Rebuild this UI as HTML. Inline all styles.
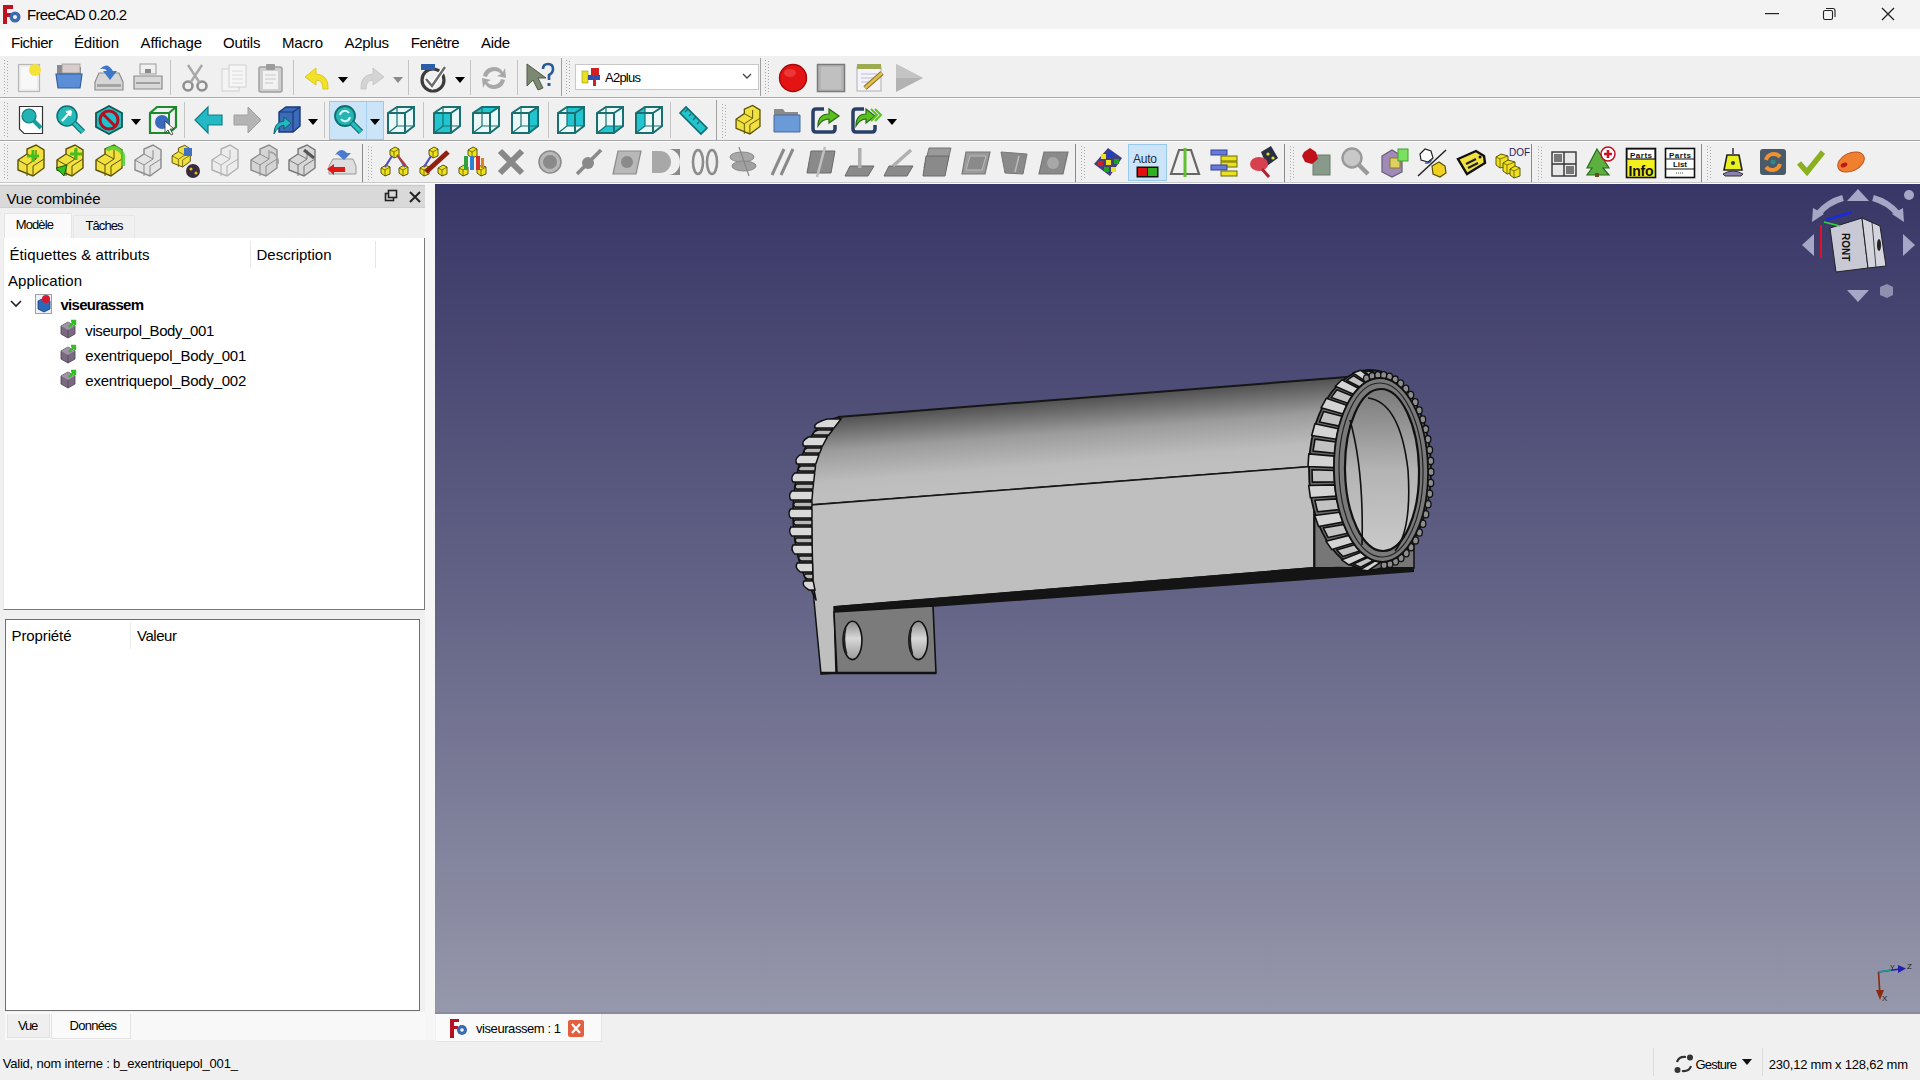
<!DOCTYPE html>
<html><head><meta charset="utf-8"><style>
*{margin:0;padding:0;box-sizing:border-box}
html,body{width:1920px;height:1080px;overflow:hidden;background:#f0f0f0;font-family:"Liberation Sans",sans-serif;color:#000}
.t{position:absolute;white-space:nowrap}
.r{position:absolute}
svg{position:absolute;overflow:visible}
</style></head><body>
<div class="r" style="left:0px;top:0px;width:1920px;height:29px;background:#f3f3f3;"></div>
<div class="r" style="left:0px;top:29px;width:1920px;height:27px;background:#ffffff;"></div>
<div class="r" style="left:0px;top:56px;width:1920px;height:128px;background:#f0f0f0;"></div>
<div class="r" style="left:0px;top:97px;width:1920px;height:1px;background:#a8a8a8;"></div>
<div class="r" style="left:0px;top:98px;width:1920px;height:1px;background:#fcfcfc;"></div>
<div class="r" style="left:0px;top:140px;width:1920px;height:1px;background:#a8a8a8;"></div>
<div class="r" style="left:0px;top:141px;width:1920px;height:1px;background:#fcfcfc;"></div>
<div class="r" style="left:0px;top:182px;width:1920px;height:1px;background:#c9c9c9;"></div>
<div class="r" style="left:0px;top:183px;width:1920px;height:1px;background:#fbfbfb;"></div>
<div class="t" style="left:27px;top:7.30px;font-size:15px;line-height:15px;color:#000;letter-spacing:-0.645px;">FreeCAD 0.20.2</div>
<div class="t" style="left:11px;top:34.80px;font-size:15px;line-height:15px;color:#000;letter-spacing:-0.500px;">Fichier</div>
<div class="t" style="left:74px;top:34.80px;font-size:15px;line-height:15px;color:#000;letter-spacing:-0.143px;">Édition</div>
<div class="t" style="left:140.5px;top:34.80px;font-size:15px;line-height:15px;color:#000;letter-spacing:-0.098px;">Affichage</div>
<div class="t" style="left:223px;top:34.80px;font-size:15px;line-height:15px;color:#000;letter-spacing:-0.169px;">Outils</div>
<div class="t" style="left:282px;top:34.80px;font-size:15px;line-height:15px;color:#000;letter-spacing:-0.172px;">Macro</div>
<div class="t" style="left:344.5px;top:34.80px;font-size:15px;line-height:15px;color:#000;letter-spacing:-0.272px;">A2plus</div>
<div class="t" style="left:410.75px;top:34.80px;font-size:15px;line-height:15px;color:#000;letter-spacing:-0.492px;">Fenêtre</div>
<div class="t" style="left:481px;top:34.80px;font-size:15px;line-height:15px;color:#000;letter-spacing:-0.339px;">Aide</div>
<svg style="left:0;top:0" width="1920" height="190" viewBox="0 0 1920 190"><line x1="4.5" y1="60" x2="4.5" y2="94" stroke="#a8a8a8" stroke-width="1" stroke-dasharray="1 2"/><line x1="7.5" y1="61" x2="7.5" y2="94" stroke="#a8a8a8" stroke-width="1" stroke-dasharray="1 2"/><g transform="translate(14.0,62.0) scale(1.0)"><rect x="4.5" y="2.5" width="21" height="27" fill="#eeeeee" stroke="#b8b8b8" stroke-width="1.2"/><rect x="7" y="5" width="16" height="22" fill="#f8f8f8"/><circle cx="21" cy="8" r="6" fill="#f4e23a"/></g><g transform="translate(54.0,62.0) scale(1.0)"><path d="M3,3 h8 l2,2 h14 v9 H3z" fill="#8a8a8a"/><rect x="8" y="2" width="18" height="9" fill="#d8cccc" stroke="#999" stroke-width="0.8"/><path d="M2,12 h26 l-2,14 H4z" fill="#5a8fd8" stroke="#34609e" stroke-width="1.2"/></g><g transform="translate(93.0,62.0) scale(1.0)"><path d="M2,20 L6,11 H26 L30,20 V28 H2Z" fill="#d6d6d6" stroke="#8c8c8c" stroke-width="1.2"/><rect x="4" y="22" width="24" height="3" fill="#a4a4a4"/><path d="M7,7 Q14,-1 20,9 H24 L17,18 L10,9 H14 Q12,6 7,7Z" fill="#3d78c8"/></g><g transform="translate(132.0,62.0) scale(1.0)"><rect x="8" y="2" width="16" height="10" fill="#f0f0f0" stroke="#9a9a9a"/><path d="M2,14 H30 V27 H2Z" fill="#d8d8d8" stroke="#8a8a8a" stroke-width="1.2"/><rect x="4" y="20" width="24" height="2" fill="#a0a0a0"/><rect x="13" y="7" width="6" height="4" fill="#8a8a8a"/></g><rect x="170" y="60" width="1" height="35" fill="#c4c4c4"/><g transform="translate(179.0,62.0) scale(1.0)"><circle cx="9" cy="24" r="4.5" fill="none" stroke="#8e8e8e" stroke-width="2.6"/><circle cx="23" cy="24" r="4.5" fill="none" stroke="#8e8e8e" stroke-width="2.6"/><path d="M11.5,20.5 L23,3 M20.5,20.5 L9,3" stroke="#a8a8a8" stroke-width="2.4"/></g><g transform="translate(219.0,62.0) scale(1.0)"><rect x="3" y="7" width="17" height="22" fill="#f4f4f4" stroke="#cfcfcf"/><rect x="10" y="3" width="17" height="22" fill="#f6f6f6" stroke="#d0d0d0"/><path d="M13,9h11M13,13h11M13,17h11M13,21h11" stroke="#dcdcdc"/></g><g transform="translate(255.0,62.0) scale(1.0)"><rect x="4" y="5" width="23" height="25" rx="2" fill="#cfcfcf" stroke="#a0a0a0" stroke-width="1.5"/><rect x="8" y="9" width="15" height="18" fill="#f2f2f2"/><rect x="11" y="2" width="9" height="6" rx="1" fill="#9c9c9c"/><path d="M10,13h11M10,17h11M10,21h8" stroke="#c8c8c8"/></g><rect x="293" y="60" width="1" height="35" fill="#c4c4c4"/><g transform="translate(301.0,62.0) scale(1.0)"><path d="M27,27 Q28,13 15,12 V6 L4,15 L15,23 V18 Q22,18 22,27Z" fill="#f2e12a" stroke="#e0c818" stroke-width="1"/></g><path d="M338,77 h10 l-5,6z" fill="#000"/><g transform="translate(356.0,62.0) scale(1.0)"><path d="M5,27 Q4,13 17,12 V6 L28,15 L17,23 V18 Q10,18 10,27Z" fill="#d4d4d4" stroke="#c8c8c8" stroke-width="1"/></g><path d="M393,77 h10 l-5,6z" fill="#8a8a8a"/><rect x="408" y="60" width="1" height="35" fill="#c4c4c4"/><g transform="translate(417.0,62.0) scale(1.0)"><circle cx="16" cy="18" r="11" fill="none" stroke="#3c3c3c" stroke-width="3.2"/><path d="M9,17 L15,24 L28,5" stroke="#fff" stroke-width="5" fill="none"/><path d="M9,17 L15,24 L28,5" stroke="#6a6a6a" stroke-width="2.4" fill="none"/><rect x="4" y="2" width="14" height="6" fill="#2a5ea8"/></g><path d="M455,77 h10 l-5,6z" fill="#000"/><rect x="470" y="60" width="1" height="35" fill="#c4c4c4"/><g transform="translate(478.0,62.0) scale(1.0)"><path d="M5,14 A11,11 0 0 1 25,10 L27,6 L28,16 L19,14 L23,12 A8,8 0 0 0 9,15Z" fill="#a8a8a8"/><path d="M27,18 A11,11 0 0 1 7,22 L5,26 L4,16 L13,18 L9,20 A8,8 0 0 0 23,17Z" fill="#a8a8a8"/></g><rect x="517" y="60" width="1" height="35" fill="#c4c4c4"/><g transform="translate(524.0,62.0) scale(1.0)"><path d="M3,2 L3,24 L9,18 L14,28 L19,26 L14,16 L22,16Z" fill="#7c8874" stroke="#4e5a48" stroke-width="1"/><path d="M19,7 Q19,2 24,2 Q29,2 29,7 Q29,11 25,13 V18" stroke="#2a5a98" stroke-width="2.6" fill="none"/><rect x="23.5" y="21" width="3" height="3" fill="#2a5a98"/></g><rect x="561" y="58" width="1" height="38" fill="#a0a0a0"/><line x1="566.5" y1="60" x2="566.5" y2="94" stroke="#a8a8a8" stroke-width="1" stroke-dasharray="1 2"/><line x1="569.5" y1="61" x2="569.5" y2="94" stroke="#a8a8a8" stroke-width="1" stroke-dasharray="1 2"/><rect x="575.5" y="64.5" width="183" height="25" fill="#fff" stroke="#c8c8c8"/><rect x="582" y="71" width="6" height="12" fill="#e8e020" stroke="#9a9a20" stroke-width="0.6"/><rect x="591" y="68" width="8" height="7" fill="#d02020"/><rect x="588" y="75" width="12" height="5" fill="#3050b0"/><rect x="593" y="80" width="3" height="6" fill="#d02020"/><path d="M743,74 L747,78 L751,74" stroke="#444" stroke-width="1.3" fill="none"/><rect x="760" y="58" width="1" height="38" fill="#a0a0a0"/><line x1="765.5" y1="60" x2="765.5" y2="94" stroke="#a8a8a8" stroke-width="1" stroke-dasharray="1 2"/><line x1="768.5" y1="61" x2="768.5" y2="94" stroke="#a8a8a8" stroke-width="1" stroke-dasharray="1 2"/><g transform="translate(777.0,62.0) scale(1.0)"><circle cx="16" cy="16" r="13.5" fill="#e41414" stroke="#a80808" stroke-width="1.4"/><ellipse cx="13" cy="11" rx="6" ry="4" fill="#f25050" opacity="0.6"/></g><g transform="translate(815.0,62.0) scale(1.0)"><rect x="2.5" y="2.5" width="27" height="27" fill="#b4b4b4" stroke="#7a7a7a" stroke-width="1.5"/><rect x="6" y="5" width="20" height="22" fill="#c0c0c0"/></g><g transform="translate(854.0,62.0) scale(1.0)"><rect x="3" y="5" width="24" height="24" fill="#f6f2fa" stroke="#b0b0b0"/><rect x="3" y="2" width="24" height="5" fill="#9eaa50"/><path d="M7,12h16M7,16h16M7,20h10" stroke="#b8c0d0"/><path d="M11,26 L28,11" stroke="#8a6a20" stroke-width="5"/><path d="M11,26 L28,11" stroke="#e0c050" stroke-width="3"/></g><g transform="translate(893.0,62.0) scale(1.0)"><path d="M3,2 L30,16 L3,30Z" fill="#b2b2b2"/><path d="M3,2 L30,16 L3,16Z" fill="#c4c4c4"/></g><line x1="4.5" y1="102" x2="4.5" y2="138" stroke="#a8a8a8" stroke-width="1" stroke-dasharray="1 2"/><line x1="7.5" y1="103" x2="7.5" y2="138" stroke="#a8a8a8" stroke-width="1" stroke-dasharray="1 2"/><g transform="translate(15.0,104.0) scale(1.0)"><path d="M4.5,2.5 H27.5 V29.5 H9 L4.5,25Z" fill="#fff" stroke="#333" stroke-width="1.2"/><circle cx="14" cy="12" r="7" fill="#22b4b4" stroke="#0e7878" stroke-width="1.2"/><path d="M19,17 L26,24" stroke="#14a0a0" stroke-width="4"/></g><g transform="translate(54.0,104.0) scale(1.0)"><circle cx="13" cy="12" r="10" fill="#24b8b8" stroke="#0c7070" stroke-width="1.5"/><path d="M8,17 L17,7 M17,7 L12,8 M17,7 L16,12" stroke="#fff" stroke-width="2.2" fill="none"/><path d="M20,19 L29,28" stroke="#0c7070" stroke-width="6"/><path d="M20,19 L29,28" stroke="#24c0c0" stroke-width="3.5"/></g><g transform="translate(93.0,104.0) scale(1.0)"><polygon points="16,2 29,9 29,23 16,30 3,23 3,9" fill="#22c0c8" stroke="#0c5a50" stroke-width="1.8"/><circle cx="16" cy="16" r="9" fill="none" stroke="#b01020" stroke-width="3"/><path d="M10,10 L22,22" stroke="#b01020" stroke-width="3"/></g><path d="M131,119 h10 l-5,6z" fill="#000"/><g transform="translate(147.0,104.0) scale(1.0)"><path d="M3,9 L10,3 H29 V23 L22,29 H3Z" fill="none" stroke="#1a8a2a" stroke-width="2.2"/><path d="M3,9 H22 V29 M22,9 L29,3" stroke="#1a8a2a" stroke-width="2" fill="none"/><circle cx="15" cy="18" r="7" fill="#3a6ac0"/><path d="M18,17 L18,29 L21,26 L24,31 L26,30 L23,25 L27,25Z" fill="#fff" stroke="#333" stroke-width="0.8"/></g><rect x="184" y="102" width="1" height="36" fill="#c4c4c4"/><g transform="translate(193.0,104.0) scale(1.0)"><path d="M2,16 L15,3 V11 H29 V21 H15 V29Z" fill="#22b8c4" stroke="#108088" stroke-width="1.2"/></g><g transform="translate(231.0,104.0) scale(1.0)"><path d="M30,16 L17,3 V11 H3 V21 H17 V29Z" fill="#b4b4b4" stroke="#a0a0a0" stroke-width="1"/></g><g transform="translate(270.0,104.0) scale(1.0)"><path d="M9,8 L16,3 H30 V22 L23,28 H9Z" fill="#3a6ab8" stroke="#1a3a78" stroke-width="1.4"/><path d="M9,8 H23 V28 M23,8 L30,3" stroke="#1a3a78" stroke-width="1.2" fill="none"/><path d="M4,30 Q4,18 14,17 V13 L21,19 L14,25 V21 Q8,22 4,30Z" fill="#22b8c0" stroke="#0e6068" stroke-width="1"/></g><path d="M308,119 h10 l-5,6z" fill="#000"/><rect x="324" y="102" width="1" height="36" fill="#c4c4c4"/><rect x="329.5" y="101.5" width="54" height="38" fill="#cce4f7" stroke="#99c9ef"/><rect x="366" y="102" width="1" height="37" fill="#a8d0f0"/><g transform="translate(332.0,104.0) scale(1.0)"><circle cx="13" cy="12" r="10" fill="#24b4b4" stroke="#0c7070" stroke-width="1.8"/><path d="M8,11 A5,5 0 0 1 17,9 M18,13 A5,5 0 0 1 9,15" stroke="#d8f4f4" stroke-width="2" fill="none"/><path d="M20,19 L29,28" stroke="#0c7070" stroke-width="6"/><path d="M20,19 L29,28" stroke="#24c0c0" stroke-width="3.5"/></g><path d="M370,119 h10 l-5,6z" fill="#000"/><g transform="translate(385.0,104.0) scale(1.0)"><path d="M3,9 L12,3 H29 V22 L20,29 H3Z" fill="#eaf8f8"/><path d="M3,9 L12,3 H29 V22 L20,29 H3Z M3,9 H20 V29 M20,9 L29,3" stroke="#1a7070" stroke-width="2" fill="none"/><path d="M12,3 V22 H29 M12,22 L3,29" stroke="#1a7070" stroke-width="1.2" fill="none"/></g><rect x="423" y="102" width="1" height="36" fill="#c4c4c4"/><g transform="translate(431.0,104.0) scale(1.0)"><path d="M3,9 L12,3 H29 V22 L20,29 H3Z" fill="#eaf8f8"/><rect x="3" y="9" width="17" height="20" fill="#22c4d0"/><path d="M3,9 L12,3 H29 V22 L20,29 H3Z M3,9 H20 V29 M20,9 L29,3" stroke="#1a7070" stroke-width="2" fill="none"/><path d="M12,3 V22 H29 M12,22 L3,29" stroke="#1a7070" stroke-width="1.2" fill="none"/></g><g transform="translate(470.0,104.0) scale(1.0)"><path d="M3,9 L12,3 H29 V22 L20,29 H3Z" fill="#eaf8f8"/><polygon points="3,9 12,3 29,3 20,9" fill="#22c4d0"/><path d="M3,9 L12,3 H29 V22 L20,29 H3Z M3,9 H20 V29 M20,9 L29,3" stroke="#1a7070" stroke-width="2" fill="none"/><path d="M12,3 V22 H29 M12,22 L3,29" stroke="#1a7070" stroke-width="1.2" fill="none"/></g><g transform="translate(509.0,104.0) scale(1.0)"><path d="M3,9 L12,3 H29 V22 L20,29 H3Z" fill="#eaf8f8"/><polygon points="20,9 29,3 29,22 20,29" fill="#22c4d0"/><path d="M3,9 L12,3 H29 V22 L20,29 H3Z M3,9 H20 V29 M20,9 L29,3" stroke="#1a7070" stroke-width="2" fill="none"/><path d="M12,3 V22 H29 M12,22 L3,29" stroke="#1a7070" stroke-width="1.2" fill="none"/></g><rect x="548" y="102" width="1" height="36" fill="#c4c4c4"/><g transform="translate(555.0,104.0) scale(1.0)"><path d="M3,9 L12,3 H29 V22 L20,29 H3Z" fill="#eaf8f8"/><rect x="12" y="3" width="17" height="19" fill="#22c4d0"/><path d="M3,9 L12,3 H29 V22 L20,29 H3Z M3,9 H20 V29 M20,9 L29,3" stroke="#1a7070" stroke-width="2" fill="none"/><path d="M12,3 V22 H29 M12,22 L3,29" stroke="#1a7070" stroke-width="1.2" fill="none"/></g><g transform="translate(594.0,104.0) scale(1.0)"><path d="M3,9 L12,3 H29 V22 L20,29 H3Z" fill="#eaf8f8"/><polygon points="3,29 12,22 29,22 20,29" fill="#22c4d0"/><path d="M3,9 L12,3 H29 V22 L20,29 H3Z M3,9 H20 V29 M20,9 L29,3" stroke="#1a7070" stroke-width="2" fill="none"/><path d="M12,3 V22 H29 M12,22 L3,29" stroke="#1a7070" stroke-width="1.2" fill="none"/></g><g transform="translate(633.0,104.0) scale(1.0)"><path d="M3,9 L12,3 H29 V22 L20,29 H3Z" fill="#eaf8f8"/><polygon points="3,9 12,3 12,22 3,29" fill="#22c4d0"/><path d="M3,9 L12,3 H29 V22 L20,29 H3Z M3,9 H20 V29 M20,9 L29,3" stroke="#1a7070" stroke-width="2" fill="none"/><path d="M12,3 V22 H29 M12,22 L3,29" stroke="#1a7070" stroke-width="1.2" fill="none"/></g><rect x="670" y="102" width="1" height="36" fill="#c4c4c4"/><g transform="translate(677.0,104.0) scale(1.0)"><path d="M3,9 L9,3 L30,24 L24,30Z" fill="#22c4cc" stroke="#0e6a70" stroke-width="1.6"/><path d="M8,8 L11,5 M12,12 L14,10 M16,16 L19,13 M20,20 L22,18" stroke="#0e6a70" stroke-width="1.3"/></g><rect x="716" y="100" width="1" height="40" fill="#a0a0a0"/><line x1="722.5" y1="104" x2="722.5" y2="138" stroke="#a8a8a8" stroke-width="1" stroke-dasharray="1 2"/><line x1="725.5" y1="105" x2="725.5" y2="138" stroke="#a8a8a8" stroke-width="1" stroke-dasharray="1 2"/><g transform="translate(733.3,106.3) scale(0.92)"><path d="M3,14 L12,8 V3 L21,-1 L29,4 V22 L18,30 L3,24Z" fill="#f0e040" stroke="#5a5000" stroke-width="1.4"/><path d="M3,14 L12,19 L21,13 V4 M12,19 V30 M12,8 L21,13 M18,30 L18,20 L29,13" stroke="#5a5000" stroke-width="1" fill="none"/></g><g transform="translate(771.0,104.0) scale(1.0)"><path d="M3,5 H12 L14,8 H27 V28 H3Z" fill="#8a8a8a"/><path d="M3,11 H29 V28 H3Z" fill="#6a9ad8" stroke="#4a6a9a" stroke-width="1"/></g><g transform="translate(810.0,104.0) scale(1.0)"><path d="M14,5 H6 Q3,5 3,8 V25 Q3,28 6,28 H22 Q25,28 25,25 V21" stroke="#2a4068" stroke-width="3.5" fill="none"/><path d="M8,22 Q8,10 19,10 V5 L29,12 L19,19 V15 Q12,15 8,22Z" fill="#58c020" stroke="#2a6a10" stroke-width="1.2"/></g><g transform="translate(850.0,104.0) scale(1.0)"><path d="M14,5 H6 Q3,5 3,8 V25 Q3,28 6,28 H22 Q25,28 25,25 V21" stroke="#2a4068" stroke-width="3.5" fill="none"/><path d="M6,22 Q6,10 16,10 V5 L25,12 L16,19 V15 Q10,15 6,22Z" fill="#58c020" stroke="#2a6a10" stroke-width="1.2"/><path d="M25,5 L31,11 L25,17 M21,5 L27,11 L21,17" stroke="#58c020" stroke-width="2" fill="none"/></g><path d="M887,119 h10 l-5,6z" fill="#000"/><line x1="4.5" y1="144" x2="4.5" y2="180" stroke="#a8a8a8" stroke-width="1" stroke-dasharray="1 2"/><line x1="7.5" y1="145" x2="7.5" y2="180" stroke="#a8a8a8" stroke-width="1" stroke-dasharray="1 2"/><g transform="translate(15.0,146.0) scale(1.0)"><path d="M3,14 L12,8 V3 L21,-1 L29,4 V22 L18,30 L3,24Z" fill="#f0e040" stroke="#5a5000" stroke-width="1.4"/><path d="M3,14 L12,19 L21,13 V4 M12,19 V30 M12,8 L21,13 M18,30 L18,20 L29,13" stroke="#5a5000" stroke-width="1" fill="none"/><path d="M18,4 V16 M12,10 H24" stroke="#40c020" stroke-width="3"/></g><g transform="translate(54.0,146.0) scale(1.0)"><path d="M3,14 L12,8 V3 L21,-1 L29,4 V22 L18,30 L3,24Z" fill="#f0e040" stroke="#5a5000" stroke-width="1.4"/><path d="M3,14 L12,19 L21,13 V4 M12,19 V30 M12,8 L21,13 M18,30 L18,20 L29,13" stroke="#5a5000" stroke-width="1" fill="none"/><path d="M22,2 V14 M16,8 H28" stroke="#40c020" stroke-width="3"/><path d="M2,22 L10,30 L13,19Z" fill="#30c020" stroke="#1a6010"/></g><g transform="translate(93.0,146.0) scale(1.0)"><path d="M3,14 L12,8 V3 L21,-1 L29,4 V22 L18,30 L3,24Z" fill="#f0e040" stroke="#5a5000" stroke-width="1.4"/><path d="M3,14 L12,19 L21,13 V4 M12,19 V30 M12,8 L21,13 M18,30 L18,20 L29,13" stroke="#5a5000" stroke-width="1" fill="none"/><path d="M14,4 A10,10 0 0 1 30,14 L30,20" stroke="#50d030" stroke-width="4" fill="none" opacity="0.85"/></g><g transform="translate(132.0,146.0) scale(1.0)"><path d="M3,14 L12,8 V3 L21,-1 L29,4 V22 L18,30 L3,24Z" fill="#e4e4e4" stroke="#8a8a8a" stroke-width="1.4"/><path d="M3,14 L12,19 L21,13 V4 M12,19 V30 M12,8 L21,13 M18,30 L18,20 L29,13" stroke="#8a8a8a" stroke-width="1" fill="none"/></g><g transform="translate(170.0,146.0) scale(1.0)"><g transform="scale(0.7)"><path d="M3,14 L12,8 V3 L21,-1 L29,4 V22 L18,30 L3,24Z" fill="#f0e040" stroke="#5a5000" stroke-width="1.4"/><path d="M3,14 L12,19 L21,13 V4 M12,19 V30 M12,8 L21,13 M18,30 L18,20 L29,13" stroke="#5a5000" stroke-width="1" fill="none"/></g><rect x="14" y="2" width="8" height="8" fill="#4070c0"/><circle cx="23" cy="25" r="7" fill="#3a2a40"/><circle cx="21" cy="23" r="1.5" fill="#e0c020"/><circle cx="26" cy="27" r="1.5" fill="#e0c020"/></g><g transform="translate(209.0,146.0) scale(1.0)"><path d="M3,14 L12,8 V3 L21,-1 L29,4 V22 L18,30 L3,24Z" fill="#ececec" stroke="#b0b0b0" stroke-width="1.4"/><path d="M3,14 L12,19 L21,13 V4 M12,19 V30 M12,8 L21,13 M18,30 L18,20 L29,13" stroke="#b0b0b0" stroke-width="1" fill="none"/></g><g transform="translate(248.0,146.0) scale(1.0)"><path d="M3,14 L12,8 V3 L21,-1 L29,4 V22 L18,30 L3,24Z" fill="#d4d4d4" stroke="#8c8c8c" stroke-width="1.4"/><path d="M3,14 L12,19 L21,13 V4 M12,19 V30 M12,8 L21,13 M18,30 L18,20 L29,13" stroke="#8c8c8c" stroke-width="1" fill="none"/><path d="M22,6 A10,10 0 0 1 30,18" stroke="#a0a0a0" stroke-width="1.5" fill="none"/></g><g transform="translate(286.0,146.0) scale(1.0)"><path d="M3,14 L12,8 V3 L21,-1 L29,4 V22 L18,30 L3,24Z" fill="#d8d8d8" stroke="#777" stroke-width="1.4"/><path d="M3,14 L12,19 L21,13 V4 M12,19 V30 M12,8 L21,13 M18,30 L18,20 L29,13" stroke="#777" stroke-width="1" fill="none"/><path d="M18,4 L28,12" stroke="#555" stroke-width="3"/></g><g transform="translate(325.0,146.0) scale(1.0)"><path d="M4,20 L8,13 H28 L31,20 V28 H4Z" fill="#dedede" stroke="#999" stroke-width="1"/><path d="M10,9 Q16,0 22,7 H26 L19,14 L12,8 H16 Q14,7 10,9Z" fill="#4a7ad0"/><path d="M2,23 L9,18 V21 H20 V26 H9 V29Z" fill="#e01818"/></g><rect x="362" y="144" width="1" height="38" fill="#8a8a8a"/><line x1="368.5" y1="146" x2="368.5" y2="180" stroke="#a8a8a8" stroke-width="1" stroke-dasharray="1 2"/><line x1="371.5" y1="147" x2="371.5" y2="180" stroke="#a8a8a8" stroke-width="1" stroke-dasharray="1 2"/><g transform="translate(379.0,146.0) scale(1.0)"><g transform="translate(11,1)"><polygon points="0,3 5,0 9,2 9,9 4,11 0,8" fill="#f0e020" stroke="#4a4a00" stroke-width="0.9"/><path d="M0,3 L4,5 L9,2 M4,5 V11" stroke="#4a4a00" stroke-width="0.7" fill="none"/></g><g transform="translate(2,19)"><polygon points="0,3 5,0 9,2 9,9 4,11 0,8" fill="#f0e020" stroke="#4a4a00" stroke-width="0.9"/><path d="M0,3 L4,5 L9,2 M4,5 V11" stroke="#4a4a00" stroke-width="0.7" fill="none"/></g><g transform="translate(20,19)"><polygon points="0,3 5,0 9,2 9,9 4,11 0,8" fill="#f0e020" stroke="#4a4a00" stroke-width="0.9"/><path d="M0,3 L4,5 L9,2 M4,5 V11" stroke="#4a4a00" stroke-width="0.7" fill="none"/></g><path d="M13,10 L6,21 M19,10 L26,21" stroke="#5050c0" stroke-width="2.2"/><path d="M18,9 L27,20" stroke="#b04040" stroke-width="2"/></g><g transform="translate(418.0,146.0) scale(1.0)"><g transform="translate(11,1)"><polygon points="0,3 5,0 9,2 9,9 4,11 0,8" fill="#f0e020" stroke="#4a4a00" stroke-width="0.9"/><path d="M0,3 L4,5 L9,2 M4,5 V11" stroke="#4a4a00" stroke-width="0.7" fill="none"/></g><g transform="translate(2,19)"><polygon points="0,3 5,0 9,2 9,9 4,11 0,8" fill="#f0e020" stroke="#4a4a00" stroke-width="0.9"/><path d="M0,3 L4,5 L9,2 M4,5 V11" stroke="#4a4a00" stroke-width="0.7" fill="none"/></g><g transform="translate(20,19)"><polygon points="0,3 5,0 9,2 9,9 4,11 0,8" fill="#f0e020" stroke="#4a4a00" stroke-width="0.9"/><path d="M0,3 L4,5 L9,2 M4,5 V11" stroke="#4a4a00" stroke-width="0.7" fill="none"/></g><path d="M13,10 L6,21" stroke="#5050c0" stroke-width="2.2"/><path d="M8,26 L30,6" stroke="#902010" stroke-width="5"/></g><g transform="translate(457.0,146.0) scale(1.0)"><g transform="translate(11,1)"><polygon points="0,3 5,0 9,2 9,9 4,11 0,8" fill="#f0e020" stroke="#4a4a00" stroke-width="0.9"/><path d="M0,3 L4,5 L9,2 M4,5 V11" stroke="#4a4a00" stroke-width="0.7" fill="none"/></g><g transform="translate(2,19)"><polygon points="0,3 5,0 9,2 9,9 4,11 0,8" fill="#f0e020" stroke="#4a4a00" stroke-width="0.9"/><path d="M0,3 L4,5 L9,2 M4,5 V11" stroke="#4a4a00" stroke-width="0.7" fill="none"/></g><g transform="translate(20,19)"><polygon points="0,3 5,0 9,2 9,9 4,11 0,8" fill="#f0e020" stroke="#4a4a00" stroke-width="0.9"/><path d="M0,3 L4,5 L9,2 M4,5 V11" stroke="#4a4a00" stroke-width="0.7" fill="none"/></g><rect x="7" y="10" width="4" height="14" fill="#30a040"/><rect x="13" y="10" width="4" height="14" fill="#3080d0"/><rect x="19" y="10" width="4" height="14" fill="#d03030"/><rect x="24" y="12" width="3" height="10" fill="#e08020"/></g><g transform="translate(495.0,146.0) scale(1.0)"><path d="M5,5 L27,27 M27,5 L5,27" stroke="#888" stroke-width="6"/></g><g transform="translate(534.0,146.0) scale(1.0)"><circle cx="16" cy="16" r="11" fill="#b8b8b8" stroke="#8a8a8a" stroke-width="1.5"/><circle cx="16" cy="16" r="7" fill="#8a8a8a"/></g><g transform="translate(573.0,146.0) scale(1.0)"><path d="M4,28 L28,4" stroke="#8a8a8a" stroke-width="3.5"/><circle cx="15" cy="17" r="6" fill="#8a8a8a"/></g><g transform="translate(611.0,146.0) scale(1.0)"><polygon points="7,5 30,5 25,28 2,28" fill="#b8b8b8" stroke="#8a8a8a" stroke-width="1.2"/><circle cx="16" cy="16" r="6" fill="#8a8a8a"/></g><g transform="translate(650.0,146.0) scale(1.0)"><path d="M2,5 H10 A11,11 0 0 1 10,27 H2Z" fill="#a8a8a8"/><path d="M18,3 H30 V29 H18 A12,13 0 0 0 18,3Z" fill="#8a8a8a"/></g><g transform="translate(689.0,146.0) scale(1.0)"><ellipse cx="9" cy="16" rx="5" ry="12" fill="none" stroke="#8c8c8c" stroke-width="2.6"/><ellipse cx="23" cy="16" rx="5" ry="12" fill="none" stroke="#8c8c8c" stroke-width="2.6"/></g><g transform="translate(727.0,146.0) scale(1.0)"><ellipse cx="15" cy="11" rx="12" ry="5" fill="#a8a8a8" stroke="#888"/><ellipse cx="17" cy="20" rx="12" ry="5" fill="#a0a0a0" stroke="#888"/><path d="M12,1 L22,30" stroke="#888" stroke-width="1.2"/></g><g transform="translate(766.0,146.0) scale(1.0)"><path d="M6,29 L18,3 M15,29 L27,3" stroke="#8a8a8a" stroke-width="3"/></g><g transform="translate(805.0,146.0) scale(1.0)"><polygon points="6,5 30,5 26,27 2,27" fill="#8a8a8a" stroke="#6a6a6a"/><path d="M20,1 L12,31" stroke="#c0c0c0" stroke-width="2.5"/></g><g transform="translate(844.0,146.0) scale(1.0)"><polygon points="6,20 30,20 24,30 1,30" fill="#8a8a8a" stroke="#6a6a6a"/><rect x="14" y="2" width="3.5" height="20" fill="#b0b0b0"/></g><g transform="translate(883.0,146.0) scale(1.0)"><polygon points="6,20 30,20 24,30 1,30" fill="#8a8a8a" stroke="#6a6a6a"/><path d="M10,20 L28,4" stroke="#b0b0b0" stroke-width="3.5"/></g><g transform="translate(921.0,146.0) scale(1.0)"><polygon points="8,2 30,2 25,22 3,22" fill="#9a9a9a" stroke="#777"/><polygon points="5,10 28,10 24,30 2,30" fill="#8a8a8a" stroke="#6a6a6a"/></g><g transform="translate(960.0,146.0) scale(1.0)"><polygon points="6,6 30,6 25,28 2,28" fill="#9a9a9a" stroke="#777" stroke-width="1.2"/><polygon points="10,10 26,10 22,24 6,24" fill="#8a8a8a" stroke="#bbb"/></g><g transform="translate(999.0,146.0) scale(1.0)"><polygon points="2,6 28,8 24,28 6,27" fill="#8a8a8a" stroke="#777"/><path d="M20,10 L16,26" stroke="#bbb" stroke-width="1.5"/></g><g transform="translate(1037.0,146.0) scale(1.0)"><polygon points="7,6 31,6 26,28 2,28" fill="#8a8a8a" stroke="#777" stroke-width="1.2"/><circle cx="16" cy="17" r="6" fill="#a8a8a8"/></g><rect x="1075" y="144" width="1" height="38" fill="#8a8a8a"/><line x1="1081.5" y1="146" x2="1081.5" y2="180" stroke="#a8a8a8" stroke-width="1" stroke-dasharray="1 2"/><line x1="1084.5" y1="147" x2="1084.5" y2="180" stroke="#a8a8a8" stroke-width="1" stroke-dasharray="1 2"/><g transform="translate(1092.0,146.0) scale(1.0)"><polygon points="16,2 30,12 18,30 2,18" fill="#404080"/><rect x="9" y="8" width="5" height="5" fill="#f0e020"/><rect x="16" y="6" width="5" height="5" fill="#2040c0"/><rect x="6" y="15" width="5" height="5" fill="#d02020"/><rect x="14" y="14" width="5" height="5" fill="#f0e020"/><rect x="22" y="13" width="5" height="5" fill="#20a020"/><rect x="12" y="21" width="5" height="5" fill="#20a020"/><rect x="19" y="21" width="5" height="5" fill="#f0e020"/></g><rect x="1128.5" y="144.5" width="38" height="36" fill="#cce4f7" stroke="#99c9ef"/><text x="1133" y="163" font-family="Liberation Sans" font-size="12" fill="#1a2a50" textLength="24">Auto</text><rect x="1136.5" y="166.5" width="22" height="11" fill="#111"/><rect x="1138" y="168" width="9" height="8" fill="#e01010"/><rect x="1148" y="168" width="9" height="8" fill="#30b020"/><g transform="translate(1169.0,146.0) scale(1.0)"><polygon points="10,4 22,4 30,28 2,28" fill="none" stroke="#666" stroke-width="2.2"/><path d="M16,2 V31" stroke="#60c030" stroke-width="3"/></g><g transform="translate(1208.0,146.0) scale(1.0)"><rect x="3" y="4" width="16" height="5" fill="#6a7ad8" stroke="#3040a0"/><rect x="13" y="10" width="16" height="5" fill="#e8e020" stroke="#6a6a00"/><rect x="13" y="16" width="16" height="5" fill="#e8e020" stroke="#6a6a00"/><rect x="3" y="19" width="16" height="5" fill="#6a7ad8" stroke="#3040a0"/><rect x="13" y="25" width="16" height="5" fill="#e8e020" stroke="#6a6a00"/></g><g transform="translate(1247.0,146.0) scale(1.0)"><polygon points="14,6 24,0 31,12 20,20" fill="#2a3040"/><circle cx="21" cy="8" r="1.6" fill="#e0e020"/><circle cx="26" cy="12" r="1.6" fill="#e0e020"/><ellipse cx="12" cy="18" rx="9" ry="7" fill="#d84050"/><path d="M15,23 L22,31" stroke="#b02030" stroke-width="3"/></g><rect x="1284" y="144" width="1" height="38" fill="#8a8a8a"/><line x1="1290.5" y1="146" x2="1290.5" y2="180" stroke="#a8a8a8" stroke-width="1" stroke-dasharray="1 2"/><line x1="1293.5" y1="147" x2="1293.5" y2="180" stroke="#a8a8a8" stroke-width="1" stroke-dasharray="1 2"/><g transform="translate(1300.0,146.0) scale(1.0)"><rect x="13" y="9" width="17" height="20" fill="#8a9a8a" stroke="#6a7a6a"/><path d="M4,6 L10,2 L16,6 L18,13 L12,18 L5,16 L2,10Z" fill="#c01018"/></g><g transform="translate(1339.0,146.0) scale(1.0)"><circle cx="13" cy="12" r="9.5" fill="#c8c8c8" stroke="#9a9a9a" stroke-width="2.4"/><path d="M20,19 L29,28" stroke="#9a9a9a" stroke-width="4.5"/></g><g transform="translate(1378.0,146.0) scale(1.0)"><polygon points="4,10 14,4 24,10 24,26 14,31 4,26" fill="#a08ab8" stroke="#6a5a7a" stroke-width="1.2"/><rect x="12" y="12" width="10" height="10" fill="#e0d060" stroke="#8a7a20"/><rect x="20" y="3" width="10" height="12" fill="#7ae060" stroke="#40a030"/></g><g transform="translate(1416.0,146.0) scale(1.0)"><path d="M4,8 L9,3 L15,5 L17,12 L12,16 L5,14Z" fill="#fff" stroke="#222" stroke-width="1.2"/><path d="M2,30 L30,4" stroke="#222" stroke-width="1.5"/><path d="M16,20 L23,16 L29,20 L30,27 L24,31 L17,28Z" fill="#f0d020" stroke="#5a5000" stroke-width="1.2"/><path d="M9,17 Q14,18 16,13" stroke="#2a4a90" stroke-width="1.2" fill="none"/></g><g transform="translate(1455.0,146.0) scale(1.0)"><polygon points="3,13 21,5 29,10 30,17 12,28" fill="#f0e040" stroke="#111" stroke-width="2.4"/><path d="M11,18 L21,13 M13,22 L23,17" stroke="#222" stroke-width="2"/><circle cx="25" cy="11" r="1.5" fill="#111"/></g><g transform="translate(1494.0,146.0) scale(1.0)"><g transform="translate(2,8)"><polygon points="0,3 5,0 12,2 12,12 4,14 0,11" fill="#f0e020" stroke="#4a4a00" stroke-width="0.9"/><path d="M0,3 L4,5 L12,2 M4,5 V14" stroke="#4a4a00" stroke-width="0.7" fill="none"/></g><g transform="translate(9,14)"><polygon points="0,3 5,0 12,2 12,12 4,14 0,11" fill="#f0e020" stroke="#4a4a00" stroke-width="0.9"/><path d="M0,3 L4,5 L12,2 M4,5 V14" stroke="#4a4a00" stroke-width="0.7" fill="none"/></g><g transform="translate(16,20)"><polygon points="0,3 5,0 10,2 10,10 4,12 0,9" fill="#f0e020" stroke="#4a4a00" stroke-width="0.9"/><path d="M0,3 L4,5 L10,2 M4,5 V12" stroke="#4a4a00" stroke-width="0.7" fill="none"/></g><text x="15" y="10" font-family="Liberation Sans" font-size="10" fill="#20206a">DOF</text></g><rect x="1531" y="144" width="1" height="38" fill="#8a8a8a"/><line x1="1538.5" y1="146" x2="1538.5" y2="180" stroke="#a8a8a8" stroke-width="1" stroke-dasharray="1 2"/><line x1="1541.5" y1="147" x2="1541.5" y2="180" stroke="#a8a8a8" stroke-width="1" stroke-dasharray="1 2"/><g transform="translate(1548.0,146.0) scale(1.0)"><rect x="4" y="6" width="24" height="24" fill="#e8e8e8" stroke="#333" stroke-width="1.4"/><path d="M16,6 V30 M4,18 H28" stroke="#333" stroke-width="1.4"/><rect x="6" y="8" width="8" height="8" fill="#777"/><rect x="18" y="20" width="8" height="8" fill="#777"/></g><g transform="translate(1585.0,146.0) scale(1.0)"><polygon points="12,3 24,22 18,22 24,29 2,29 7,22 2,22" fill="#5cb040" stroke="#2a6a20" stroke-width="1.2"/><rect x="10" y="27" width="4" height="4" fill="#6a4a20"/><circle cx="23" cy="8" r="7" fill="#fff" stroke="#c01020" stroke-width="1.5"/><path d="M23,4 V12 M19,8 H27" stroke="#d01020" stroke-width="2.6"/></g><rect x="1626.5" y="148.5" width="29" height="29" fill="#f4f020" stroke="#111" stroke-width="1.6"/><rect x="1627" y="149" width="28" height="10" fill="#fff" stroke="#111" stroke-width="1.2"/><text x="1630" y="157.5" font-family="Liberation Sans" font-weight="bold" font-size="8" fill="#111" textLength="22">Parts</text><text x="1628.5" y="175.5" font-family="Liberation Sans" font-weight="bold" font-size="14" fill="#111" textLength="25">Info</text><rect x="1665.5" y="148.5" width="29" height="29" fill="#fff" stroke="#111" stroke-width="1.6"/><path d="M1665,159h30M1665,169h30" stroke="#111" stroke-width="1.2"/><text x="1669" y="157.5" font-family="Liberation Sans" font-weight="bold" font-size="8" fill="#111" textLength="22">Parts</text><text x="1673" y="167" font-family="Liberation Sans" font-weight="bold" font-size="8" fill="#111" textLength="14">List</text><path d="M1676,173h8" stroke="#555" stroke-dasharray="1 1"/><rect x="1701" y="144" width="1" height="38" fill="#8a8a8a"/><line x1="1707.5" y1="146" x2="1707.5" y2="180" stroke="#a8a8a8" stroke-width="1" stroke-dasharray="1 2"/><line x1="1710.5" y1="147" x2="1710.5" y2="180" stroke="#a8a8a8" stroke-width="1" stroke-dasharray="1 2"/><g transform="translate(1717.0,146.0) scale(1.0)"><path d="M16,2 V8" stroke="#333" stroke-width="1.5"/><path d="M10,9 H22 L25,24 H7Z" fill="#e8f020" stroke="#222" stroke-width="1.6"/><path d="M6,28 Q16,22 26,28 L24,30 H8Z" fill="#8a80b0" stroke="#333"/><circle cx="16" cy="17" r="2" fill="#333"/></g><g transform="translate(1757.0,146.0) scale(1.0)"><rect x="3" y="3" width="26" height="26" rx="3" fill="#4a5a68"/><path d="M9,14 A8,8 0 0 1 23,11 M23,18 A8,8 0 0 1 9,21" stroke="#f09030" stroke-width="4" fill="none"/><circle cx="16" cy="16" r="2.5" fill="#2a8a8a"/></g><g transform="translate(1795.0,146.0) scale(1.0)"><path d="M4,17 L12,26 L28,6" stroke="#8ab020" stroke-width="5.5" fill="none"/></g><g transform="translate(1835.0,146.0) scale(1.0)"><ellipse cx="16" cy="16" rx="14" ry="9" transform="rotate(-25 16 16)" fill="#f08030" stroke="#c05020" stroke-width="1"/><ellipse cx="9" cy="19" rx="3.5" ry="2.2" transform="rotate(-25 9 19)" fill="#c01818"/></g></svg>
<div class="t" style="left:605px;top:71.00px;font-size:13px;line-height:13px;color:#000;letter-spacing:-0.753px;">A2plus</div>
<div class="r" style="left:0px;top:184px;width:435px;height:856px;background:#f0f0f0;"></div>
<div class="r" style="left:0px;top:185px;width:429px;height:23px;background:#d9d9d9;border-top:1px solid #c8c8c8;border-bottom:1px solid #cfcfcf;"></div>
<div class="t" style="left:6.5px;top:190.90px;font-size:15px;line-height:15px;color:#000;letter-spacing:-0.122px;">Vue combinée</div>
<svg style="left:380px;top:189px" width="20" height="16" viewBox="0 0 20 16"><rect x="5.5" y="4.5" width="8" height="7" fill="none" stroke="#222" stroke-width="1.6"/><rect x="8.5" y="1.5" width="8" height="7" fill="#d9d9d9" stroke="#222" stroke-width="1.6"/></svg>
<svg style="left:407px;top:189px" width="16" height="16" viewBox="0 0 16 16"><path d="M3 3L13 13M13 3L3 13" stroke="#222" stroke-width="2"/></svg>
<div class="r" style="left:4px;top:213px;width:68px;height:25px;background:#fafafa;border:1px solid #e4e4e4;border-bottom:none;"></div>
<div class="r" style="left:73px;top:215px;width:62px;height:23px;background:#f0f0f0;border:1px solid #e6e6e6;border-bottom:none;"></div>
<div class="t" style="left:15.7px;top:217.70px;font-size:13px;line-height:13px;color:#000;letter-spacing:-0.871px;">Modèle</div>
<div class="t" style="left:85.5px;top:219.00px;font-size:13px;line-height:13px;color:#000;letter-spacing:-0.928px;">Tâches</div>
<div class="r" style="left:3px;top:238px;width:422px;height:372px;background:#ffffff;border-right:1px solid #7a7a7a;border-bottom:1px solid #7a7a7a;border-left:1px solid #e8e8e8;"></div>
<div class="r" style="left:250px;top:241px;width:1px;height:27px;background:#e6e6e6;"></div>
<div class="r" style="left:375px;top:241px;width:1px;height:27px;background:#e6e6e6;"></div>
<div class="t" style="left:9.5px;top:247.30px;font-size:15px;line-height:15px;color:#000;letter-spacing:0.074px;">Étiquettes &amp; attributs</div>
<div class="t" style="left:256.5px;top:247.30px;font-size:15px;line-height:15px;color:#000;">Description</div>
<div class="t" style="left:8px;top:272.90px;font-size:15px;line-height:15px;color:#000;letter-spacing:0.062px;">Application</div>
<svg style="left:10px;top:299px" width="12" height="10" viewBox="0 0 12 10"><path d="M1 2L6 7L11 2" fill="none" stroke="#222" stroke-width="1.6"/></svg>
<div class="t" style="left:60.5px;top:297.30px;font-size:15px;line-height:15px;color:#000;letter-spacing:-0.742px;font-weight:bold;">viseurassem</div>
<div class="t" style="left:85.3px;top:322.80px;font-size:15px;line-height:15px;color:#000;letter-spacing:-0.408px;">viseurpol_Body_001</div>
<div class="t" style="left:85.3px;top:347.80px;font-size:15px;line-height:15px;color:#000;letter-spacing:-0.237px;">exentriquepol_Body_001</div>
<div class="t" style="left:85.3px;top:372.80px;font-size:15px;line-height:15px;color:#000;letter-spacing:-0.237px;">exentriquepol_Body_002</div>
<div class="r" style="left:5px;top:619px;width:415px;height:392px;background:#ffffff;border:1px solid #6e6e6e;"></div>
<div class="r" style="left:130px;top:622px;width:1px;height:27px;background:#ececec;"></div>
<div class="t" style="left:11.5px;top:628.30px;font-size:15px;line-height:15px;color:#000;letter-spacing:-0.109px;">Propriété</div>
<div class="t" style="left:137px;top:628.30px;font-size:15px;line-height:15px;color:#000;letter-spacing:-0.450px;">Valeur</div>
<div class="r" style="left:5px;top:1012px;width:420px;height:28px;background:#f8f8f8;"></div>
<div class="r" style="left:7px;top:1014px;width:43px;height:24px;background:#efefef;border:1px solid #e2e2e2;border-top:none;"></div>
<div class="r" style="left:51px;top:1014px;width:80px;height:25px;background:#fafafa;border:1px solid #e2e2e2;border-top:none;"></div>
<div class="t" style="left:18px;top:1018.60px;font-size:13px;line-height:13px;color:#000;letter-spacing:-1.178px;">Vue</div>
<div class="t" style="left:69.6px;top:1019.00px;font-size:13px;line-height:13px;color:#000;letter-spacing:-0.760px;">Données</div>
<div class="r" style="left:425px;top:184px;width:10px;height:856px;background:#f6f6f6;"></div>
<div class="t" style="left:2.7px;top:1057.00px;font-size:13px;line-height:13px;color:#000;letter-spacing:-0.203px;">Valid, nom interne : b_exentriquepol_001_</div>
<div class="r" style="left:1653px;top:1048px;width:1px;height:28px;background:#dcdcdc;"></div>
<div class="r" style="left:1762px;top:1048px;width:1px;height:28px;background:#dcdcdc;"></div>
<div class="t" style="left:1695.5px;top:1057.75px;font-size:13px;line-height:13px;color:#000;letter-spacing:-0.792px;">Gesture</div>
<div class="t" style="left:1768.75px;top:1058.00px;font-size:13px;line-height:13px;color:#000;letter-spacing:-0.228px;">230,12 mm x 128,62 mm</div>
<svg style="left:1673px;top:1053px" width="22" height="22" viewBox="0 0 22 22"><circle cx="17" cy="4.5" r="3" fill="#333"/><circle cx="4.5" cy="17" r="3" fill="#333"/><path d="M4 9Q6 3 13 4M18 13Q16 19 9 18" fill="none" stroke="#333" stroke-width="2.2"/></svg>
<svg style="left:1741px;top:1058px" width="12" height="8" viewBox="0 0 12 8"><path d="M1 1H11L6 7Z" fill="#111"/></svg>
<div class="r" style="left:435px;top:1014px;width:1485px;height:26px;background:#f0f0f0;"></div>
<div class="r" style="left:436px;top:1014px;width:166px;height:28px;background:#fafafa;border-right:1px solid #e4e4e4;border-bottom:1px solid #e4e4e4;"></div>
<div class="t" style="left:476px;top:1022.00px;font-size:13px;line-height:13px;color:#000;letter-spacing:-0.432px;">viseurassem : 1</div>
<svg style="left:0;top:0" width="440" height="400" viewBox="0 0 440 400"><rect x="35.5" y="294.5" width="16" height="19" fill="#eef2f8" stroke="#9aa0a8"/><polygon points="38,301 44,298 50,301 50,309 44,312 38,309" fill="#2a6ab8" stroke="#1a3a70" stroke-width="0.8"/><circle cx="46" cy="299" r="4" fill="#d81830"/><g transform="translate(60,321)"><polygon points="1,5 8,1 15,5 15,13 8,17 1,13" fill="#7a6a80" stroke="#4a3a50" stroke-width="0.8"/><polygon points="1,5 8,1 15,5 8,9" fill="#a090a8"/><path d="M8,9 V17" stroke="#4a3a50" stroke-width="0.6"/><path d="M9,6 L15,0 M11,0 H15 V4" stroke="#30c020" stroke-width="2.4" fill="none"/></g><g transform="translate(60,346)"><polygon points="1,5 8,1 15,5 15,13 8,17 1,13" fill="#7a6a80" stroke="#4a3a50" stroke-width="0.8"/><polygon points="1,5 8,1 15,5 8,9" fill="#a090a8"/><path d="M8,9 V17" stroke="#4a3a50" stroke-width="0.6"/><path d="M9,6 L15,0 M11,0 H15 V4" stroke="#30c020" stroke-width="2.4" fill="none"/></g><g transform="translate(60,371)"><polygon points="1,5 8,1 15,5 15,13 8,17 1,13" fill="#7a6a80" stroke="#4a3a50" stroke-width="0.8"/><polygon points="1,5 8,1 15,5 8,9" fill="#a090a8"/><path d="M8,9 V17" stroke="#4a3a50" stroke-width="0.6"/><path d="M9,6 L15,0 M11,0 H15 V4" stroke="#30c020" stroke-width="2.4" fill="none"/></g></svg>
<svg style="left:0;top:0" width="1920" height="30" viewBox="0 0 1920 30"><path d="M3,5 H13 V9 H7 V13 H11 V17 H7 V24 H3Z" fill="#c01020"/><circle cx="15" cy="17" r="5.5" fill="#3a6ab0"/><circle cx="15" cy="17" r="2" fill="#f3f3f3"/><rect x="1765" y="13" width="14" height="1.2" fill="#222"/><rect x="1823.5" y="10.5" width="9" height="9" rx="1.5" fill="none" stroke="#222" stroke-width="1.1"/><path d="M1826,8.5 H1833 Q1835,8.5 1835,10.5 V17" fill="none" stroke="#222" stroke-width="1.1"/><path d="M1882,8 L1894,20 M1894,8 L1882,20" stroke="#222" stroke-width="1.3"/></svg>
<svg style="left:440px;top:1014px" width="160" height="28" viewBox="0 0 160 28"><path d="M10,5 H19 V8 H14 V12 H18 V15 H14 V24 H10Z" fill="#b81020"/><circle cx="22" cy="16" r="5" fill="#3a6ab0"/><circle cx="22" cy="16" r="1.8" fill="#f6f6f6"/><rect x="128" y="6" width="16" height="17" rx="2" fill="#e06040"/><path d="M132,10 L140,19 M140,10 L132,19" stroke="#fff" stroke-width="2.2"/></svg>
<div class="r" style="left:435px;top:184px;width:1485px;height:830px;background:linear-gradient(#383666 0%,#646487 50%,#9698ab 100%);"></div>
<div class="r" style="left:435px;top:1012px;width:1485px;height:2px;background:#8a8ba0;"></div>
<svg style="left:0;top:0" width="1920" height="1080" viewBox="0 0 1920 1080"><defs>
<linearGradient id="cyl" gradientUnits="userSpaceOnUse" x1="1000" y1="403" x2="1006" y2="480"><stop offset="0" stop-color="#4e4e4e"/><stop offset="0.45" stop-color="#9c9c9c"/><stop offset="0.85" stop-color="#bcbcbc"/><stop offset="1" stop-color="#bfbfbf"/></linearGradient>
<linearGradient id="bore" x1="0" y1="0" x2="0" y2="1"><stop offset="0" stop-color="#7a7a7a"/><stop offset="0.5" stop-color="#b4b4b4"/><stop offset="1" stop-color="#c9c9c9"/></linearGradient>
<linearGradient id="hole" x1="0" y1="0" x2="0" y2="1"><stop offset="0" stop-color="#8c8c8c"/><stop offset="0.45" stop-color="#d8d8d8"/><stop offset="1" stop-color="#9a9a9a"/></linearGradient>
<linearGradient id="tooth" x1="0" y1="0" x2="0" y2="1"><stop offset="0" stop-color="#dcdcdc"/><stop offset="1" stop-color="#a8a8a8"/></linearGradient>
</defs><polygon points="1314.0,470.0 1414.0,462.0 1414.0,568.0 1314.0,568.0" fill="#777777" stroke="#111" stroke-width="1.5"/><polygon points="811.0,504.0 1360.0,462.0 1360.0,564.0 834.0,607.0 836.0,673.0 821.0,674.0 813.0,590.0" fill="#bfbfbf" stroke="#111" stroke-width="1.5"/><path d="M1314,500 V568" stroke="#111" stroke-width="1.6"/><polygon points="1314.0,505.0 1340.0,503.0 1350.0,566.0 1314.0,568.0" fill="#777777"/><path d="M1314.5,480 V568" stroke="#111" stroke-width="1.8"/><path d="M838,417 L1360,376 L1360,462 L811,504 L811,497 L815,462 L824,440 Z" fill="url(#cyl)"/><path d="M838,417 L1360,376" stroke="#161616" stroke-width="2" fill="none"/><path d="M811,505 L1330,465" stroke="#161616" stroke-width="1.6" fill="none"/><polygon points="834.0,606.0 1314.0,567.0 1414.0,567.0 1414.0,572.0 1314.0,579.5 834.0,614.0" fill="#141414"/><polygon points="834.0,612.0 933.0,606.0 936.0,673.0 837.0,673.0" fill="#7b7b7b" stroke="#111" stroke-width="1.6"/><path d="M821,673 L936,673" stroke="#111" stroke-width="2.5"/><ellipse cx="852.5" cy="640.4" rx="9.4" ry="19.2" fill="url(#hole)" stroke="#111" stroke-width="1.6"/><path d="M845.5,628 Q842.5,640 846.5,654" stroke="#222" stroke-width="2" fill="none"/><ellipse cx="918.3" cy="640.4" rx="9.4" ry="19.2" fill="url(#hole)" stroke="#111" stroke-width="1.6"/><path d="M911.3,628 Q908.3,640 912.3,654" stroke="#222" stroke-width="2" fill="none"/><polygon points="839.0,417.0 825.9,421.0 820.6,425.0 816.7,429.0 813.6,433.0 810.9,437.0 808.6,441.0 806.5,445.0 804.7,449.0 803.1,453.0 801.6,457.0 800.3,461.0 799.2,465.0 798.1,469.0 797.2,473.0 796.4,477.0 795.6,481.0 795.0,485.0 794.5,489.0 794.0,493.0 793.6,497.0 793.4,501.0 793.2,505.0 793.0,509.0 793.0,513.0 793.0,517.0 793.2,521.0 793.4,525.0 793.6,529.0 794.0,533.0 794.5,537.0 795.0,541.0 795.6,545.0 796.4,549.0 797.2,553.0 798.1,557.0 799.2,561.0 800.3,565.0 801.6,569.0 803.1,573.0 804.7,577.0 806.5,581.0 808.6,585.0 810.9,589.0 814.0,596.0 816.0,600.0 812.0,580.0 811.0,540.0 811.0,497.0 815.0,462.0 824.0,440.0 840.0,419.0" fill="#5a5a5a" stroke="#111" stroke-width="1.6" stroke-linejoin="round"/><path d="M827.2,419 L841.0,419 L834.1,428 L815.1,428 Q812.1,423.5 827.2,419Z" fill="#d9d9d9" stroke="#111" stroke-width="1.5"/><path d="M817.9,430.0 L832.6,430.0 L828.8,435.0 L814.2,435.0 Q811.2,432.5 817.9,430.0Z" fill="#b8b8b8" stroke="#111" stroke-width="1.5"/><path d="M808.4,437.0 L827.3,437.0 L822.5,446.0 L803.6,446.0 Q800.6,441.5 808.4,437.0Z" fill="#d9d9d9" stroke="#111" stroke-width="1.5"/><path d="M807.1,448.0 L821.7,448.0 L819.7,453.0 L805.1,453.0 Q802.1,450.5 807.1,448.0Z" fill="#b8b8b8" stroke="#111" stroke-width="1.5"/><path d="M799.8,455.0 L818.9,455.0 L815.8,464.0 L796.9,464.0 Q793.9,459.5 799.8,455.0Z" fill="#d9d9d9" stroke="#111" stroke-width="1.5"/><path d="M800.9,466.0 L815.5,466.0 L815.0,471.0 L799.6,471.0 Q796.6,468.5 800.9,466.0Z" fill="#b8b8b8" stroke="#111" stroke-width="1.5"/><path d="M794.7,473.0 L814.7,473.0 L813.7,482.0 L793.0,482.0 Q790.0,477.5 794.7,473.0Z" fill="#d9d9d9" stroke="#111" stroke-width="1.5"/><path d="M797.1,484.0 L813.5,484.0 L812.9,489.0 L796.5,489.0 Q793.5,486.5 797.1,484.0Z" fill="#b8b8b8" stroke="#111" stroke-width="1.5"/><path d="M791.7,491.0 L812.7,491.0 L812.0,500.0 L790.9,500.0 Q787.9,495.5 791.7,491.0Z" fill="#d9d9d9" stroke="#111" stroke-width="1.5"/><path d="M795.3,502.0 L812.0,502.0 L812.0,507.0 L795.1,507.0 Q792.1,504.5 795.3,502.0Z" fill="#b8b8b8" stroke="#111" stroke-width="1.5"/><path d="M790.5,509.0 L812.0,509.0 L812.0,518.0 L790.6,518.0 Q787.5,513.5 790.5,509.0Z" fill="#d9d9d9" stroke="#111" stroke-width="1.5"/><path d="M795.1,520.0 L812.0,520.0 L812.0,525.0 L795.4,525.0 Q792.1,522.5 795.1,520.0Z" fill="#b8b8b8" stroke="#111" stroke-width="1.5"/><path d="M791.0,527.0 L812.0,527.0 L812.0,536.0 L791.8,536.0 Q788.0,531.5 791.0,527.0Z" fill="#d9d9d9" stroke="#111" stroke-width="1.5"/><path d="M796.6,538.0 L812.0,538.0 L812.1,543.0 L797.3,543.0 Q793.6,540.5 796.6,538.0Z" fill="#b8b8b8" stroke="#111" stroke-width="1.5"/><path d="M793.1,545.0 L812.1,545.0 L812.4,554.0 L794.9,554.0 Q790.1,549.5 793.1,545.0Z" fill="#d9d9d9" stroke="#111" stroke-width="1.5"/><path d="M799.9,556.0 L812.4,556.0 L812.5,561.0 L801.2,561.0 Q796.9,558.5 799.9,556.0Z" fill="#b8b8b8" stroke="#111" stroke-width="1.5"/><path d="M797.2,563.0 L812.6,563.0 L812.8,572.0 L800.2,572.0 Q794.2,567.5 797.2,563.0Z" fill="#d9d9d9" stroke="#111" stroke-width="1.5"/><path d="M805.5,574.0 L812.9,574.0 L813.0,579.0 L807.6,579.0 Q802.5,576.5 805.5,574.0Z" fill="#b8b8b8" stroke="#111" stroke-width="1.5"/><path d="M804.0,581.0 L813.2,581.0 L815.0,590.0 L809.0,590.0 Q801.0,585.5 804.0,581.0Z" fill="#d9d9d9" stroke="#111" stroke-width="1.5"/><ellipse cx="1370" cy="470" rx="61" ry="100" fill="#6a6a6a" stroke="#111" stroke-width="1.8" transform="rotate(0 1370 470)"/><polygon points="1367.8,570.9 1360.1,569.7 1375.1,560.9 1381.0,562.0" fill="#d4d4d4" stroke="#111" stroke-width="1.6" stroke-linejoin="round"/><polygon points="1360.6,567.2 1353.3,564.0 1367.8,557.6 1373.6,560.5" fill="#c2c2c2" stroke="#111" stroke-width="1.6" stroke-linejoin="round"/><polygon points="1348.8,564.9 1341.7,559.8 1360.9,552.2 1366.4,556.7" fill="#d4d4d4" stroke="#111" stroke-width="1.6" stroke-linejoin="round"/><polygon points="1342.9,556.6 1336.6,549.9 1354.5,544.7 1359.6,550.9" fill="#c2c2c2" stroke="#111" stroke-width="1.6" stroke-linejoin="round"/><polygon points="1331.8,549.6 1326.0,541.2 1348.8,535.4 1353.3,543.0" fill="#d4d4d4" stroke="#111" stroke-width="1.6" stroke-linejoin="round"/><polygon points="1328.1,537.5 1323.3,527.9 1343.8,524.5 1347.7,533.3" fill="#c2c2c2" stroke="#111" stroke-width="1.6" stroke-linejoin="round"/><polygon points="1318.6,526.5 1314.7,515.5 1339.8,512.2 1342.9,522.1" fill="#d4d4d4" stroke="#111" stroke-width="1.6" stroke-linejoin="round"/><polygon points="1317.6,511.8 1314.9,500.3 1336.7,498.9 1339.1,509.6" fill="#c2c2c2" stroke="#111" stroke-width="1.6" stroke-linejoin="round"/><polygon points="1310.4,497.8 1308.7,485.5 1334.8,484.9 1336.3,496.1" fill="#d4d4d4" stroke="#111" stroke-width="1.6" stroke-linejoin="round"/><polygon points="1312.4,482.1 1312.0,469.7 1334.0,470.5 1334.6,482.0" fill="#c2c2c2" stroke="#111" stroke-width="1.6" stroke-linejoin="round"/><polygon points="1308.0,466.5 1308.8,453.9 1334.4,456.1 1334.0,467.6" fill="#d4d4d4" stroke="#111" stroke-width="1.6" stroke-linejoin="round"/><polygon points="1313.1,451.1 1315.0,439.1 1335.9,442.0 1334.6,453.3" fill="#c2c2c2" stroke="#111" stroke-width="1.6" stroke-linejoin="round"/><polygon points="1311.7,435.5 1314.9,423.8 1338.5,428.7 1336.3,439.3" fill="#d4d4d4" stroke="#111" stroke-width="1.6" stroke-linejoin="round"/><polygon points="1319.5,422.0 1323.6,411.5 1342.1,416.3 1339.1,426.1" fill="#c2c2c2" stroke="#111" stroke-width="1.6" stroke-linejoin="round"/><polygon points="1321.1,407.8 1326.3,398.3 1346.7,405.3 1343.0,414.0" fill="#d4d4d4" stroke="#111" stroke-width="1.6" stroke-linejoin="round"/><polygon points="1331.1,397.6 1336.9,389.7 1352.2,395.9 1347.8,403.3" fill="#c2c2c2" stroke="#111" stroke-width="1.6" stroke-linejoin="round"/><polygon points="1335.3,386.3 1342.0,379.8 1358.4,388.3 1353.4,394.2" fill="#d4d4d4" stroke="#111" stroke-width="1.6" stroke-linejoin="round"/><polygon points="1346.6,380.3 1353.7,375.7 1365.1,382.7 1359.7,387.0" fill="#c2c2c2" stroke="#111" stroke-width="1.6" stroke-linejoin="round"/><polygon points="1352.9,372.9 1360.5,370.2 1372.2,379.2 1366.5,381.8" fill="#d4d4d4" stroke="#111" stroke-width="1.6" stroke-linejoin="round"/><polygon points="1364.7,371.7 1372.2,371.0 1379.6,378.0 1373.7,378.8" fill="#c2c2c2" stroke="#111" stroke-width="1.6" stroke-linejoin="round"/><ellipse cx="1366.5" cy="378.5" rx="3.0" ry="3.6" fill="#8e8e8e" stroke="#111" stroke-width="1.3"/><ellipse cx="1372.1" cy="376.1" rx="3.0" ry="3.6" fill="#8e8e8e" stroke="#111" stroke-width="1.3"/><ellipse cx="1377.9" cy="375.1" rx="3.0" ry="3.6" fill="#8e8e8e" stroke="#111" stroke-width="1.3"/><ellipse cx="1383.7" cy="375.3" rx="3.0" ry="3.6" fill="#8e8e8e" stroke="#111" stroke-width="1.3"/><ellipse cx="1389.5" cy="376.8" rx="3.0" ry="3.6" fill="#8e8e8e" stroke="#111" stroke-width="1.3"/><ellipse cx="1395.2" cy="379.6" rx="3.0" ry="3.6" fill="#8e8e8e" stroke="#111" stroke-width="1.3"/><ellipse cx="1400.6" cy="383.5" rx="3.0" ry="3.6" fill="#8e8e8e" stroke="#111" stroke-width="1.3"/><ellipse cx="1405.8" cy="388.7" rx="3.0" ry="3.6" fill="#8e8e8e" stroke="#111" stroke-width="1.3"/><ellipse cx="1410.7" cy="395.0" rx="3.0" ry="3.6" fill="#8e8e8e" stroke="#111" stroke-width="1.3"/><ellipse cx="1415.2" cy="402.2" rx="3.0" ry="3.6" fill="#8e8e8e" stroke="#111" stroke-width="1.3"/><ellipse cx="1419.2" cy="410.4" rx="3.0" ry="3.6" fill="#8e8e8e" stroke="#111" stroke-width="1.3"/><ellipse cx="1422.7" cy="419.4" rx="3.0" ry="3.6" fill="#8e8e8e" stroke="#111" stroke-width="1.3"/><ellipse cx="1425.6" cy="429.1" rx="3.0" ry="3.6" fill="#8e8e8e" stroke="#111" stroke-width="1.3"/><ellipse cx="1427.9" cy="439.3" rx="3.0" ry="3.6" fill="#8e8e8e" stroke="#111" stroke-width="1.3"/><ellipse cx="1429.6" cy="449.9" rx="3.0" ry="3.6" fill="#8e8e8e" stroke="#111" stroke-width="1.3"/><ellipse cx="1430.7" cy="460.9" rx="3.0" ry="3.6" fill="#8e8e8e" stroke="#111" stroke-width="1.3"/><ellipse cx="1431.0" cy="471.9" rx="3.0" ry="3.6" fill="#8e8e8e" stroke="#111" stroke-width="1.3"/><ellipse cx="1430.7" cy="482.9" rx="3.0" ry="3.6" fill="#8e8e8e" stroke="#111" stroke-width="1.3"/><ellipse cx="1429.7" cy="493.7" rx="3.0" ry="3.6" fill="#8e8e8e" stroke="#111" stroke-width="1.3"/><ellipse cx="1428.1" cy="504.3" rx="3.0" ry="3.6" fill="#8e8e8e" stroke="#111" stroke-width="1.3"/><ellipse cx="1425.8" cy="514.3" rx="3.0" ry="3.6" fill="#8e8e8e" stroke="#111" stroke-width="1.3"/><ellipse cx="1422.9" cy="523.8" rx="3.0" ry="3.6" fill="#8e8e8e" stroke="#111" stroke-width="1.3"/><ellipse cx="1419.4" cy="532.5" rx="3.0" ry="3.6" fill="#8e8e8e" stroke="#111" stroke-width="1.3"/><ellipse cx="1415.5" cy="540.4" rx="3.0" ry="3.6" fill="#8e8e8e" stroke="#111" stroke-width="1.3"/><ellipse cx="1411.0" cy="547.3" rx="3.0" ry="3.6" fill="#8e8e8e" stroke="#111" stroke-width="1.3"/><ellipse cx="1406.2" cy="553.2" rx="3.0" ry="3.6" fill="#8e8e8e" stroke="#111" stroke-width="1.3"/><ellipse cx="1401.0" cy="558.0" rx="3.0" ry="3.6" fill="#8e8e8e" stroke="#111" stroke-width="1.3"/><ellipse cx="1395.5" cy="561.5" rx="3.0" ry="3.6" fill="#8e8e8e" stroke="#111" stroke-width="1.3"/><ellipse cx="1389.9" cy="563.9" rx="3.0" ry="3.6" fill="#8e8e8e" stroke="#111" stroke-width="1.3"/><ellipse cx="1384.1" cy="564.9" rx="3.0" ry="3.6" fill="#8e8e8e" stroke="#111" stroke-width="1.3"/><ellipse cx="1381" cy="470" rx="47" ry="92" fill="#7a7a7a" stroke="#111" stroke-width="1.8" transform="rotate(-1 1381 470)"/><ellipse cx="1381" cy="470" rx="42" ry="87" fill="none" stroke="#222" stroke-width="1.2" transform="rotate(-1 1381 470)"/><ellipse cx="1382" cy="470" rx="37" ry="81" fill="url(#bore)" stroke="#111" stroke-width="2.2" transform="rotate(-1 1382 470)"/><path d="M1368,398 Q1400,402 1408,470 Q1412,530 1395,551" fill="none" stroke="#111" stroke-width="1.6"/><path d="M1350,420 Q1364,470 1362,545" fill="none" stroke="#111" stroke-width="1.6"/><polygon points="1858,189 1847,201 1869,201" fill="#a6a6c6"/><polygon points="1858,302 1847,290 1869,290" fill="#a6a6c6"/><polygon points="1802,245 1814,234 1814,256" fill="#a6a6c6"/><polygon points="1915,245 1903,234 1903,256" fill="#a6a6c6"/><path d="M1818,214 Q1828,202 1843,198" stroke="#a6a6c6" stroke-width="6" fill="none"/><polygon points="1812,222 1813,208 1824,214" fill="#a6a6c6"/><path d="M1873,198 Q1888,202 1898,214" stroke="#a6a6c6" stroke-width="6" fill="none"/><polygon points="1904,222 1903,208 1892,214" fill="#a6a6c6"/><circle cx="1909" cy="195" r="5" fill="#a6a6c6"/><polygon points="1880,287 1887,284 1893,287 1893,295 1887,298 1880,295" fill="#8f8fb0"/><polygon points="1830,228 1862,218 1868,268 1836,272" fill="#c9c9d6" stroke="#222" stroke-width="1"/><polygon points="1862,218 1880,226 1886,266 1868,268" fill="#d4d4de" stroke="#222" stroke-width="1"/><line x1="1872" y1="222" x2="1876" y2="268" stroke="#222" stroke-width="0.8"/><text x="0" y="0" font-family="Liberation Sans" font-weight="bold" font-size="10" fill="#111" transform="translate(1842,233) rotate(90)">RONT</text><ellipse cx="1879" cy="245" rx="2" ry="6" fill="#222"/><line x1="1821" y1="225" x2="1821" y2="258" stroke="#e0102a" stroke-width="2"/><line x1="1826" y1="220" x2="1852" y2="212" stroke="#1a2ae0" stroke-width="2.5"/><line x1="1824" y1="222" x2="1840" y2="226" stroke="#36d040" stroke-width="1.5"/><line x1="1878.5" y1="972" x2="1880" y2="996" stroke="#8a2a10" stroke-width="1.6"/><polygon points="1876,990 1884,990 1880,1000" fill="#8a2a10"/><line x1="1878.5" y1="972" x2="1900" y2="969" stroke="#2020b0" stroke-width="1.6"/><polygon points="1898,965 1906,968.5 1898,973" fill="#2020b0"/><line x1="1878.5" y1="972" x2="1891" y2="970" stroke="#20a080" stroke-width="1.4"/><text x="1882" y="1001" font-family="Liberation Sans" font-size="8" fill="#222">X</text><text x="1890" y="970" font-family="Liberation Sans" font-size="7" fill="#222">Y</text><text x="1907" y="969" font-family="Liberation Sans" font-size="8" fill="#222">Z</text></svg>
</body></html>
